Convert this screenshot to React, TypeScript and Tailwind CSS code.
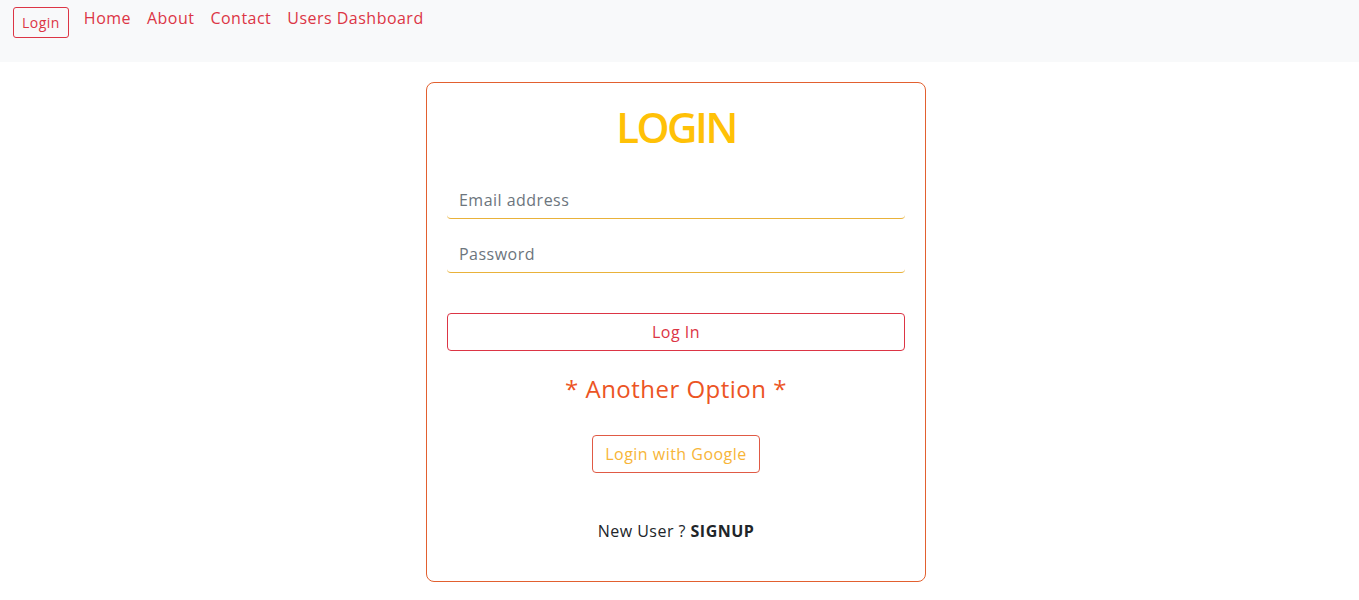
import React from "react";

export default function App() {
  const font = { fontFamily: '"Open Sans", "Noto Sans", sans-serif' };
  return (
    <div className="min-h-[600px] bg-white tracking-[0.03em]" style={font}>
      <nav className="h-[62px] bg-[#f8f9fa] flex items-start pl-[13px] pt-[7px]">
        <button className="h-[31px] px-[8px] border border-[#dc3545] rounded-[3px] text-[14px] text-[#dc3545] bg-transparent leading-none">
          Login
        </button>
        <ul className="flex ml-[7px] -mt-[1px] text-[16px] leading-[24px] text-[#dc3545]">
          <li className="px-[8px]">Home</li>
          <li className="px-[8px]">About</li>
          <li className="px-[8px]">Contact</li>
          <li className="px-[8px]">Users Dashboard</li>
        </ul>
      </nav>
      <div className="flex justify-center pr-[7px] pt-[20px]">
        <div className="w-[500px] h-[500px] border border-[#e2602f] rounded-[8px] px-[20px] pt-[19px] flex flex-col">
          <h1 className="text-center text-[42px] leading-[50px] font-semibold tracking-[-2.5px] text-[#ffc107]">LOGIN</h1>
          <div className="mt-[29px] h-[38px] border-b border-[#e9b23a] rounded-b-[4px] flex items-center px-[12px] text-[16px] text-[#6c757d]">
            Email address
          </div>
          <div className="mt-[16px] h-[38px] border-b border-[#e9b23a] rounded-b-[4px] flex items-center px-[12px] text-[16px] text-[#6c757d]">
            Password
          </div>
          <button className="mt-[40px] h-[38px] w-full border border-[#dc3545] rounded-[4px] text-[16px] text-[#dc3545]">
            Log In
          </button>
          <div className="mt-[23px] text-center text-[24px] leading-[29px] text-[#ec5424]">* Another Option *</div>
          <div className="mt-[32px] flex justify-center">
            <button className="h-[38px] px-[12px] border border-[#e05a45] rounded-[4px] text-[16px] text-[#f7b538]">
              Login with Google
            </button>
          </div>
          <p className="mt-[46px] text-center text-[16px] leading-[24px] text-[#212529]">
            New User ? <span className="font-bold">SIGNUP</span>
          </p>
        </div>
      </div>
    </div>
  );
}
